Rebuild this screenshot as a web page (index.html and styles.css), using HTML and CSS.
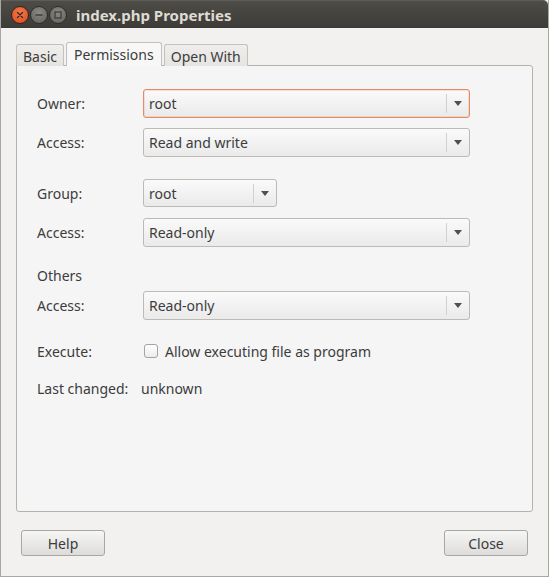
FILE: index.html
```html
<!DOCTYPE html>
<html>
<head>
<meta charset="utf-8">
<link rel="stylesheet" href="styles.css">
</head>
<body>
<div class="window">
  <div class="titlebar">
    <div class="wbtns">
      <span class="wb close"><svg width="16" height="16" viewBox="0 0 16 16"><path d="M5.5 5.5 L10.5 10.5 M10.5 5.5 L5.5 10.5" stroke="#3a2a22" stroke-width="1.4" stroke-linecap="round"/></svg></span>
      <span class="wb"><svg width="16" height="16" viewBox="0 0 16 16"><path d="M4.5 8 H11.5" stroke="#3b3a36" stroke-width="1.4"/></svg></span>
      <span class="wb"><svg width="16" height="16" viewBox="0 0 16 16"><rect x="5" y="5" width="6" height="6" fill="none" stroke="#3b3a36" stroke-width="1.2"/></svg></span>
    </div>
    <div class="title">index.php Properties</div>
  </div>
  <div class="body">
    <div class="tabs">
      <div class="tab">Basic</div>
      <div class="tab active">Permissions</div>
      <div class="tab">Open With</div>
    </div>
    <div class="panel">
      <div class="row r-owner">
        <span class="label">Owner:</span>
        <div class="combo focus wide"><span>root</span><i class="sep"></i><i class="arrow"></i></div>
      </div>
      <div class="row r-access1">
        <span class="label">Access:</span>
        <div class="combo wide"><span>Read and write</span><i class="sep"></i><i class="arrow"></i></div>
      </div>
      <div class="row r-group">
        <span class="label">Group:</span>
        <div class="combo small"><span>root</span><i class="sep"></i><i class="arrow"></i></div>
      </div>
      <div class="row r-access2">
        <span class="label">Access:</span>
        <div class="combo wide"><span>Read-only</span><i class="sep"></i><i class="arrow"></i></div>
      </div>
      <div class="heading">Others</div>
      <div class="row r-access3">
        <span class="label">Access:</span>
        <div class="combo wide"><span>Read-only</span><i class="sep"></i><i class="arrow"></i></div>
      </div>
      <div class="row r-exec">
        <span class="label">Execute:</span>
        <label class="check"><span class="box"></span>Allow executing file as program</label>
      </div>
      <div class="row r-last">
        <span class="label">Last changed:</span>
        <span class="value">unknown</span>
      </div>
    </div>
    <div class="buttons">
      <button class="btn">Help</button>
      <button class="btn">Close</button>
    </div>
  </div>
</div>
</body>
</html>
```
FILE: styles.css
```css
* { box-sizing: border-box; }
html, body { margin: 0; padding: 0; background: #f2f1f0; }
body { font-family: "Noto Sans", "DejaVu Sans", sans-serif; font-size: 14px; color: #3c3c3c; }
.window {
  width: 549px; height: 577px; background: #f2f1f0;
  border-left: 1px solid #a9a7a1; border-right: 1px solid #a9a7a1; border-bottom: 1px solid #a9a7a1;
  display: flex; flex-direction: column;
}
.titlebar {
  height: 28px; flex: none;
  background: linear-gradient(#4d4c47, #3c3b37);
  border-top: 1px solid #5d5c57;
  border-top-right-radius: 5px;
  display: flex; align-items: center;
}
.wbtns { display: flex; gap: 1px; margin-left: 10px; width: 65px; flex: none; }
.wb {
  width: 18px; height: 18px; flex: none; border-radius: 50%;
  background: radial-gradient(circle at 50% 35%, #8a8984, #5f5e5a);
  border: 1px solid #2e2d2a;
  display: flex; align-items: center; justify-content: center;
}
.wb svg { display: block; }
.wb.close { background: radial-gradient(circle at 50% 35%, #f47b4a, #d9481c); border-color: #3a2418; }
.title { color: #dfdbd2; font-weight: bold; font-size: 15px; }

.body { flex: 1; display: flex; flex-direction: column; padding: 14px 15px 0 15px; }
.tabs { display: flex; align-items: flex-end; height: 24px; position: relative; z-index: 1; }
.tab {
  height: 22px; padding: 0 6px; line-height: 23px;
  border: 1px solid #c4c1bb; border-bottom: none;
  border-radius: 3px 3px 0 0;
  background: linear-gradient(#efeeec, #e6e4e1);
  color: #3c3c3c; margin-right: 2px;
}
.tab.active {
  height: 24px; line-height: 23px; background: #f7f7f7; padding: 0 7px;
  border-color: #c4c1bb;
}
.panel {
  height: 447px; flex: none; margin-top: -1px;
  background: #f5f5f5; border: 1px solid #b5b2ac; border-radius: 0 3px 3px 3px;
  padding: 23px 0 0 20px;
}
.row { display: flex; align-items: center; }
.label { width: 106px; flex: none; }
.combo {
  height: 29px; position: relative; display: flex; align-items: center;
  border: 1px solid #bdbab4; border-radius: 3px;
  background: linear-gradient(#fafafa, #eaeaea);
  padding-left: 5px; color: #3c3c3c;
}
.combo.wide { width: 327px; }
.combo.small { width: 134px; }
.combo.focus { border-color: #e58a64; box-shadow: inset 0 0 0 1px rgba(240,150,110,0.25); }
.combo span { flex: 1; }
.combo .sep { width: 1px; height: 19px; background: #d2d0cc; margin-right: 7px; }
.combo .arrow {
  width: 0; height: 0; border-left: 4px solid transparent; border-right: 4px solid transparent;
  border-top: 5px solid #505050; margin-right: 7px;
}
.r-access1 { margin-top: 10px; }
.r-group { margin-top: 22px; }
.r-group .combo { height: 28px; }
.r-access2 { margin-top: 11px; }
.heading { margin-top: 19px; height: 20px; line-height: 20px; }
.r-access3 { margin-top: 5px; }
.r-exec { margin-top: 21px; height: 20px; }
.check { display: flex; align-items: center; }
.box {
  width: 14px; height: 14px; border: 1px solid #a5a39e; border-radius: 3px;
  background: linear-gradient(#ffffff, #ececec); margin: 0 7px 0 1px;
}
.r-last { margin-top: 17px; height: 20px; }
.value { margin-left: -2px; }

.buttons { display: flex; justify-content: space-between; padding: 18px 5px 0 5px; }
.btn {
  width: 84px; height: 26px; font: inherit; color: #3c3c3c;
  border: 1px solid #a9a7a2; border-radius: 3px;
  background: linear-gradient(#f6f6f5, #dddcda);
  padding: 0;
}
```
